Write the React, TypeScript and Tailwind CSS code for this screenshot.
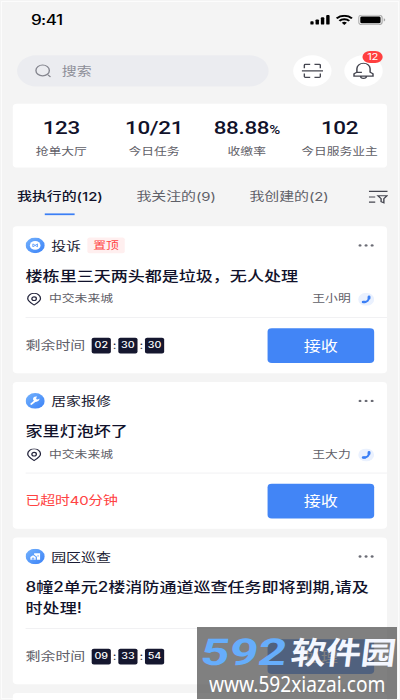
import React from "react";

const CJK = "font-['Inter','Noto_Sans_CJK_SC',sans-serif]";

function Envelope() {
  return (
    <>
      <circle cx="9" cy="9" r="5" fill="#fff" />
      <path d="M6.800 7.200v3.600M11.200 7.200v3.600M7 7.400 9 9l2-1.600M7 10.600 9 9l2 1.600" stroke="#5b9bfa" strokeWidth="0.900" fill="none" />
    </>
  );
}

function Wrench() {
  return (
    <>
      <path d="M5.400 12.600 9.600 8.400" stroke="#fff" strokeWidth="2" strokeLinecap="round" />
      <path d="M12.900 6.200a3 3 0 1 1-2-2.200L9.900 5.600l.3 1.500 1.400.3z" fill="#fff" />
    </>
  );
}

function Park() {
  return (
    <>
      <path d="M4.500 9.700 7 7.600l2.500 2.100v3.200h-5z" fill="#fff" />
      <path d="M8 5.200h5.600v7.700h-3V9.300L8 7.200z" fill="#fff" />
      <path d="M6.300 12.900v-2h1.400v2M11.700 7.400v2" stroke="#4f92fa" strokeWidth="0.800" fill="none" />
    </>
  );
}

function TypeIcon({ children }: { children: React.ReactNode }) {
  return (
    <svg className="h-[18px] w-[18px] shrink-0" viewBox="0 0 18 18">
      <defs>
        <linearGradient id="badge" x1="0" y1="0" x2="1" y2="1">
          <stop offset="0" stopColor="#74b2fd" />
          <stop offset="1" stopColor="#3b82f7" />
        </linearGradient>
      </defs>
      <circle cx="9" cy="9" r="9" fill="url(#badge)" />
      {children}
    </svg>
  );
}

function Countdown({ parts }: { parts: string[] }) {
  return (
    <div className="flex items-center">
      <span className="mr-[6px] text-[14px] leading-5 text-[#5f6068]">剩余时间</span>
      {parts.map((p, i) => (
        <React.Fragment key={i}>
          {i > 0 && <span className="w-[7px] text-center text-[12px] leading-[17px] text-[#1a1b33]">:</span>}
          <span className="flex h-[18px] w-[18px] items-center justify-center rounded-[2px] bg-[#15172f] text-[10px] font-medium text-white">{p}</span>
        </React.Fragment>
      ))}
    </div>
  );
}

type CardProps = {
  icon: React.ReactNode;
  type: string;
  tag?: string;
  title: string;
  person?: string;
  action: string;
  footer: React.ReactNode;
};

function Card({ icon, type, tag, title, person, action, footer }: CardProps) {
  return (
    <article className="h-[170px] shrink-0 rounded-[4px] bg-white pl-3">
      <div className="flex h-[105px] flex-col pr-3">
        <div className="mt-[12.500px] flex h-5 items-center">
          <TypeIcon>{icon}</TypeIcon>
          <span className="ml-[6px] text-[14px] text-[#1a1b33]">{type}</span>
          {tag && <span className="ml-[6px] flex h-[18px] w-[35px] items-center justify-center rounded-[2px] bg-[#ffefef] text-[12px] text-[#ff4343]">{tag}</span>}
          <svg className="ml-auto h-1 w-[15px]" viewBox="0 0 15 4" fill="#6b6c75">
            <circle cx="1.700" cy="2" r="1.400" />
            <circle cx="7.400" cy="2" r="1.400" />
            <circle cx="13.100" cy="2" r="1.400" />
          </svg>
        </div>
        <h2 className="mt-[13px] w-[330px] text-[16px] leading-6 font-medium tracking-[-0.030px] text-[#11122b]">{title}</h2>
        {person && (
          <div className="mt-[7px] flex h-4 items-center text-[12px] text-[#5f6068]">
            <svg className="ml-[1px] h-[15px] w-[14px]" viewBox="0 0 14 15" fill="none" stroke="#23243c" strokeWidth="1.200">
              <path d="M7 14C4.800 12.300 1 9.700 1 6.500a6 6 0 0 1 12 0C13 9.700 9.200 12.300 7 14z" />
              <circle cx="7" cy="6.700" r="2.100" />
            </svg>
            <span className="ml-[7px]">中交未来城</span>
            <span className="ml-auto">{person}</span>
            <svg className="ml-[7px] h-[15px] w-[15px]" viewBox="0 0 15 15">
              <circle cx="7.500" cy="7.500" r="7.500" fill="#eaf1fe" />
              <path d="M4.700 10.700C8.300 10.700 10.300 8.700 10.200 4.600" stroke="#3b7ff5" strokeWidth="2" fill="none" />
              <path d="M4.700 10.500h1.500M10.200 4.400v1.700" stroke="#3b7ff5" strokeWidth="2.700" strokeLinecap="round" />
            </svg>
          </div>
        )}
      </div>
      <div className="flex h-[65px] items-center justify-between border-t border-[#efeff1] pr-3">
        {footer}
        <button className="h-10 w-[100px] rounded-[4px] bg-[#4285f6] text-[16px] text-white">{action}</button>
      </div>
    </article>
  );
}

const stats = [
  { value: "123", unit: "", label: "抢单大厅" },
  { value: "10/21", unit: "", label: "今日任务" },
  { value: "88.88", unit: "%", label: "收缴率" },
  { value: "102", unit: "", label: "今日服务业主" },
];

function StatusBar() {
  return (
    <div className="flex h-[46px] shrink-0 items-center pr-[15px] pl-[29px]">
      <span className="text-[16px] font-medium tracking-[-0.500px] text-black">9:41</span>
      <svg className="ml-auto h-3 w-[19px]" viewBox="0 0 19 12">
        <rect x="0" y="7.500" width="3.200" height="4" rx="1" />
        <rect x="5" y="5.500" width="3.200" height="6" rx="1" />
        <rect x="10" y="3" width="3.200" height="8.500" rx="1" />
        <rect x="15" y="0.500" width="3.200" height="11" rx="1" />
      </svg>
      <svg className="ml-[5px] h-3 w-4" viewBox="0 0 16 12" fill="none" stroke="#000" strokeWidth="2.200">
        <path d="M0.800 4.200a10.300 10.300 0 0 1 14.400 0" />
        <path d="M3.400 7.200a6.600 6.600 0 0 1 9.200 0" />
        <path d="M8 11.800 5.600 9.300a3.500 3.500 0 0 1 4.800 0z" fill="#000" stroke="none" />
      </svg>
      <svg className="-mr-[2px] ml-[5px] h-3 w-[26px]" viewBox="0 0 26 12">
        <rect x="0.500" y="0.500" width="22" height="11" rx="3" fill="none" stroke="#a5a5a5" />
        <rect x="2" y="2" width="19" height="8" rx="1.500" />
        <path d="M24 4v4c.8-.3 1.400-1.100 1.400-2S24.800 4.300 24 4z" fill="#a5a5a5" />
      </svg>
    </div>
  );
}

export default function App() {
  return (
    <div className={`relative h-[700px] w-[400px] overflow-hidden bg-[#f4f4f4] ${CJK}`}>
      <main className="flex h-[811px] w-[375px] origin-top-left scale-x-[1.066] scale-y-[0.864] flex-col">
        <StatusBar />
        <div className="mt-[18px] flex h-9 shrink-0 items-center pl-4">
          <div className="flex h-9 w-[236px] items-center rounded-full bg-[#ebecf0] pl-4">
            <svg className="h-[16px] w-[16px]" viewBox="0 0 16 16" fill="none" stroke="#85868f" strokeWidth="1.300">
              <circle cx="8" cy="7.500" r="6.300" />
              <path d="M13.300 13l1.700 1.700" strokeLinecap="round" />
            </svg>
            <span className="ml-[10px] text-[14px] text-[#8d8e98]">搜索</span>
          </div>
          <button className="ml-[23px] flex h-9 w-9 items-center justify-center rounded-full bg-white">
            <svg className="h-5 w-5" viewBox="0 0 20 20" fill="none" stroke="#44454f" strokeWidth="1.300">
              <path d="M2.500 7V3.500q0-1 1-1H8M12 2.500h4.500q1 0 1 1V7M17.500 13v3.500q0 1-1 1H12M8 17.500H3.500q-1 0-1-1V13M0 10h20" />
            </svg>
          </button>
          <button className="relative ml-[12px] flex h-9 w-9 items-center justify-center rounded-full bg-white">
            <svg className="h-5 w-5" viewBox="0 0 20 20" fill="none" stroke="#44454f" strokeWidth="1.400">
              <path d="M3.800 11.500V7.500a6.200 6.300 0 0 1 12.400 0v4l2.700 2v2.600H1.100v-2.600zM4 11.800h4.500M7.200 16.200c.3 3.200 5.300 3.200 5.600 0" />
            </svg>
            <span className="absolute -top-[5px] right-0 flex h-[14px] w-[19px] items-center justify-center rounded-full bg-[#ff3f3f] text-[10.500px] tracking-[-0.300px] text-white">12</span>
          </button>
        </div>
        <section className="mx-3 mt-[20px] flex h-[74px] shrink-0 rounded-[4px] bg-white pl-[2px]">
          {stats.map((s) => (
            <div key={s.label} className="flex w-[87px] shrink-0 flex-col items-center whitespace-nowrap">
              <div className="mt-[16px] h-6 font-['Roboto',sans-serif] text-[21px] leading-6 font-medium tracking-[-0.300px] text-[#11122b]">
                {s.value}
                <span className="text-[14px]">{s.unit}</span>
              </div>
              <div className="mt-[6px] text-[12px] leading-[18px] text-[#5f6068]">{s.label}</div>
            </div>
          ))}
        </section>
        <nav className="flex h-[67.500px] shrink-0 pl-4 text-[14px] leading-5 tracking-[-0.050px] text-[#5f6068]">
          <div className="flex w-[112px] flex-col pt-[24px]">
            <span className="font-medium text-[#11122b]">我执行的(12)</span>
            <span className="mt-[9px] ml-[26px] h-[2px] w-[28px] bg-[#3b7ff5]" />
          </div>
          <span className="w-[106px] pt-[24px]">我关注的(9)</span>
          <span className="pt-[24px]">我创建的(2)</span>
          <svg className="mt-[26px] mr-[11px] ml-auto h-4 w-[18px]" viewBox="0 0 18 16" fill="none" stroke="#44454f" strokeWidth="1.300">
            <path d="M0 1.500h17.500M0 8h6M0 14h6M8.500 6.500h8.500l-2.900 3.500v4.800l-2.600-1.300V10z" />
          </svg>
        </nav>
        <div className="flex flex-col gap-[10px] px-3">
          <Card icon={<Envelope />} type="投诉" tag="置顶" title="楼栋里三天两头都是垃圾，无人处理" person="王小明" action="接收" footer={<Countdown parts={["02", "30", "30"]} />} />
          <Card icon={<Wrench />} type="居家报修" title="家里灯泡坏了" person="王大力" action="接收" footer={<span className="text-[14px] tracking-[-0.200px] text-[#ff4343]">已超时40分钟</span>} />
          <Card icon={<Park />} type="园区巡查" title="8幢2单元2楼消防通道巡查任务即将到期,请及时处理!" action="处理" footer={<Countdown parts={["09", "33", "54"]} />} />
          <div className="h-[20px] rounded-t-[4px] bg-white" />
        </div>
      </main>
      <div className="pointer-events-none absolute inset-[1px] border border-white/70" />
      <aside className="absolute top-[627px] left-[197px] flex h-[72px] w-[200px] flex-col bg-[#555555]/75 whitespace-nowrap">
        <div className="ml-[4px] flex h-[52px] items-center">
          <span className="w-[90px] origin-left -skew-x-6 scale-x-[1.350] font-['Roboto',sans-serif] text-[37px] leading-[52px] font-bold text-[#66adfb]">592</span>
          <span className="origin-left -skew-x-6 scale-x-[1.130] text-[31px] leading-[48px] font-bold text-[#f4f7ff]">软件园</span>
        </div>
        <div className="-mt-[7px] ml-[12px] w-fit origin-left scale-x-[0.910] font-['Noto_Sans',sans-serif] text-[21px] leading-6 text-white">www.592xiazai.com</div>
      </aside>
    </div>
  );
}
